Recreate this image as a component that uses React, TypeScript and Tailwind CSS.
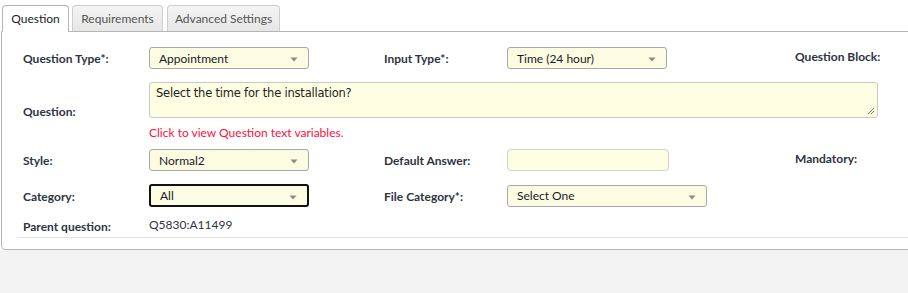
import React from 'react';

const Arrow: React.FC = () => (
  <svg width="8" height="5" viewBox="0 0 8 5" className="absolute right-[10px] top-1/2 -translate-y-[1px]">
    <path d="M0.5 0.5 H7.5 L4 4.5 Z" fill="#8a8a8a" />
  </svg>
);

const Select: React.FC<{ value: string; width?: string; focused?: boolean; height?: string }> = ({
  value,
  width = 'w-[160px]',
  focused,
  height = 'h-[22px]',
}) => (
  <div
    className={`relative ${width} ${height} rounded-[3px] bg-[#fcfce2] flex items-center pl-[9px] pt-px text-[12px] text-[#1a1a2a] ${
      focused ? 'border-2 border-[#111]' : 'border border-[#a9a9a9]'
    }`}
  >
    {value}
    <Arrow />
  </div>
);

const Label: React.FC<{ children: React.ReactNode; bold?: boolean }> = ({ children, bold = true }) => (
  <span className={`inline-block pb-[3px] text-[12px] ${bold ? 'font-bold' : ''} text-[#2e3440]`}>{children}</span>
);

const App: React.FC = () => {
  return (
    <div className="w-[908px] h-[293px] overflow-hidden bg-[#f3f3f3] font-['Segoe_UI',Lato,sans-serif] flex flex-col">
      <div className="bg-white">
        {/* tabs */}
        <div className="flex items-end h-[31px] pl-[2px] pt-[4px]">
          <div className="h-[27px] w-[67px] border border-b-0 border-[#b5b5b5] rounded-t-[4px] bg-white flex items-center justify-center text-[12px] text-[#222] relative z-10 -mb-px">
            Question
          </div>
          <div className="ml-[3px] h-[26px] w-[91px] border border-b-0 border-[#cfcfcf] rounded-t-[4px] bg-gradient-to-b from-[#f4f4f4] to-[#e6e6e6] flex items-center justify-center text-[12px] text-[#555]">
            Requirements
          </div>
          <div className="ml-[4px] h-[26px] w-[113px] border border-b-0 border-[#cfcfcf] rounded-t-[4px] bg-gradient-to-b from-[#f4f4f4] to-[#e6e6e6] flex items-center justify-center text-[12px] text-[#555]">
            Advanced Settings
          </div>
        </div>

        {/* panel */}
        <div className="ml-px w-[940px] border border-[#b5b5b5] rounded-bl-[4px] bg-white pt-[15px] pb-[11px]">
          <div className="pl-[21px]">
            {/* row 1 */}
            <div className="flex items-center h-[22px]">
              <div className="w-[126px]"><Label>Question Type*:</Label></div>
              <div className="w-[235px]"><Select value="Appointment" /></div>
              <div className="w-[123px]"><Label>Input Type*:</Label></div>
              <div className="w-[288px]"><Select value="Time (24 hour)" /></div>
              <Label>Question Block:</Label>
            </div>

            {/* row 2 */}
            <div className="flex items-center mt-[13px]">
              <div className="w-[126px]"><Label>Question:</Label></div>
              <div className="flex flex-col">
                <div className="relative w-[729px] h-[36px] rounded-[3px] border border-[#c8c8c8] bg-[#fefee2] pl-[6px] pt-[1px] text-[12px] text-[#222] font-['DejaVu_Sans',sans-serif] tracking-[-0.2px]">
                  <span className="text-[11.5px]">Select the time for the installation?</span>
                  <svg width="8" height="8" viewBox="0 0 8 8" className="absolute right-[2px] bottom-[2px]">
                    <path d="M7 1 L1 7 M7 4 L4 7" stroke="#888" strokeWidth="1" />
                  </svg>
                </div>
                <div className="h-[22px] pt-[7px] leading-[16px] text-[12px] text-[#ff1040]">
                  Click to view Question text variables.
                </div>
              </div>
            </div>

            {/* row 3 */}
            <div className="flex items-center h-[22px] mt-[9px]">
              <div className="w-[126px]"><Label>Style:</Label></div>
              <div className="w-[235px]"><Select value="Normal2" /></div>
              <div className="w-[123px]"><Label>Default Answer:</Label></div>
              <div className="w-[288px]">
                <div className="w-[162px] h-[22px] rounded-[4px] border border-[#d2d2d2] bg-[#fefee2]" />
              </div>
              <Label>Mandatory:</Label>
            </div>

            {/* row 4 */}
            <div className="flex items-center h-[23px] mt-[13px]">
              <div className="w-[126px]"><Label>Category:</Label></div>
              <div className="w-[235px]"><Select value="All" focused height="h-[23px]" /></div>
              <div className="w-[123px]"><Label>File Category*:</Label></div>
              <div className="w-[288px]"><Select value="Select One" width="w-[200px]" /></div>
            </div>

            {/* row 5 */}
            <div className="flex items-center h-[16px] mt-[11px]">
              <div className="w-[126px]"><Label>Parent question:</Label></div>
              <span className="text-[12px] text-[#2e3440] pb-[3px]">Q5830:A11499</span>
            </div>
          </div>

          <div className="ml-[15px] mt-[3px] border-t border-[#e2e2e2]" />
        </div>
      </div>
    </div>
  );
};

export default App;
